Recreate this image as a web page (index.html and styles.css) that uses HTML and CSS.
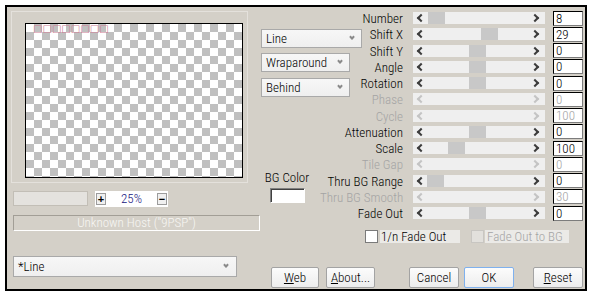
FILE: index.html
```html
<!DOCTYPE html>
<html lang="en">

<head>
    <meta charset="UTF-8">
    <title>Line</title>
    <link rel="stylesheet" href="styles.css">
</head>

<body>
    <div class="dialog">
        <!-- Preview side -->
        <div class="left-col">
            <div class="preview-panel">
                <div class="preview"><span class="missing-glyphs">□□□□□□□□</span></div>
            </div>

            <div class="zoom-row">
                <div class="zoom-field"></div>
                <div class="zoom-control">
                    <span class="zoom-btn">+</span>
                    <span class="zoom-value">25%</span>
                    <span class="zoom-btn">−</span>
                </div>
            </div>

            <div class="host-box">Unknown Host ("9PSP")</div>

            <div class="select preset-select">*Line</div>
        </div>

        <!-- Parameters side -->
        <div class="right-col">
            <div class="params">
                <div class="mode-col">
                    <div class="select select-line">Line</div>
                    <div class="select select-edge">Wraparound</div>
                    <div class="select select-order">Behind</div>
                    <div class="bg-color">
                        <div class="bg-label">BG Color</div>
                        <div class="bg-swatch"></div>
                    </div>
                </div>

                <div class="param-label">Number</div>
                <div class="track"><span class="thumb" style="left: 15px"></span></div>
                <div class="value">8</div>

                <div class="param-label">Shift X</div>
                <div class="track"><span class="thumb" style="left: 68px"></span></div>
                <div class="value">29</div>

                <div class="param-label">Shift Y</div>
                <div class="track"><span class="thumb" style="left: 56px"></span></div>
                <div class="value">0</div>

                <div class="param-label">Angle</div>
                <div class="track"><span class="thumb" style="left: 56px"></span></div>
                <div class="value">0</div>

                <div class="param-label">Rotation</div>
                <div class="track"><span class="thumb" style="left: 56px"></span></div>
                <div class="value">0</div>

                <div class="param-label disabled">Phase</div>
                <div class="track disabled"></div>
                <div class="value disabled">0</div>

                <div class="param-label disabled">Cycle</div>
                <div class="track disabled"></div>
                <div class="value disabled">100</div>

                <div class="param-label">Attenuation</div>
                <div class="track"><span class="thumb" style="left: 56px"></span></div>
                <div class="value">0</div>

                <div class="param-label">Scale</div>
                <div class="track"><span class="thumb" style="left: 35px"></span></div>
                <div class="value">100</div>

                <div class="param-label disabled">Tile Gap</div>
                <div class="track disabled"></div>
                <div class="value disabled">0</div>

                <div class="param-label">Thru BG Range</div>
                <div class="track"><span class="thumb" style="left: 14px"></span></div>
                <div class="value">0</div>

                <div class="param-label disabled">Thru BG Smooth</div>
                <div class="track disabled"></div>
                <div class="value disabled">30</div>

                <div class="param-label">Fade Out</div>
                <div class="track"><span class="thumb" style="left: 56px"></span></div>
                <div class="value">0</div>
            </div>

            <div class="check-row">
                <span class="checkbox"></span>
                <span class="check-label label-fade">1/n Fade Out</span>
                <span class="checkbox disabled"></span>
                <span class="check-label label-bg disabled">Fade Out to BG</span>
            </div>

            <div class="button-row">
                <div class="button-group group-info">
                    <button type="button"><u>W</u>eb</button>
                    <button type="button" class="btn-about"><u>A</u>bout...</button>
                </div>
                <div class="button-group group-confirm">
                    <button type="button">Cancel</button>
                    <button type="button" class="btn-default">OK</button>
                </div>
                <button type="button" class="btn-reset"><u>R</u>eset</button>
            </div>
        </div>
    </div>
</body>

</html>
```

FILE: styles.css
```css
body {
    margin: 0;
    background: #ffffff;
    font-family: Roboto, "Liberation Sans", sans-serif;
    font-stretch: 78%;
    font-weight: 350;
    font-size: 13px;
    color: #000000;
}

.dialog {
    box-sizing: border-box;
    width: 582px;
    height: 286px;
    margin: 5px 0 0 5px;
    border: 2px solid #000000;
    background: #d4d0c8;
    display: flex;
    padding: 0 2px 0 4px;
}

/* ---------- left column ---------- */

.left-col {
    width: 249px;
    display: flex;
    flex-direction: column;
}

.preview-panel {
    box-sizing: border-box;
    width: 237px;
    height: 172px;
    margin-top: 4px;
    border: 1px solid #e4e1dc;
}

.preview {
    box-sizing: border-box;
    width: 218px;
    height: 155px;
    margin: 11px 0 0 13px;
    border: 1px solid #000000;
    background: repeating-conic-gradient(#c0c0c0 0 25%, #ffffff 0 50%) 0 0 / 16px 16px;
    padding: 1px 7px;
}

.missing-glyphs {
    display: block;
    font-family: "DejaVu Sans", sans-serif;
    font-stretch: normal;
    font-weight: normal;
    font-size: 10px;
    line-height: 8px;
    color: #cf7f95;
}

.zoom-row {
    display: flex;
    gap: 7px;
    margin: 8px 0 0 2px;
}

.zoom-field {
    box-sizing: border-box;
    width: 75px;
    height: 15px;
    background: #e4e2de;
    border: 1px solid #c2beb6;
}

.zoom-control {
    box-sizing: border-box;
    width: 73px;
    height: 16px;
    background: #ffffff;
    display: flex;
    align-items: center;
    justify-content: space-between;
    padding: 0 1px;
}

.zoom-btn {
    box-sizing: border-box;
    width: 10px;
    height: 12px;
    border: 1px solid #9c9c9c;
    background: #f0f0f0;
    font-family: "Liberation Sans", sans-serif;
    font-weight: bold;
    font-size: 11px;
    line-height: 10px;
    text-align: center;
}

.zoom-value {
    color: #141480;
    line-height: 14px;
}

.host-box {
    box-sizing: border-box;
    width: 247px;
    height: 16px;
    margin: 8px 0 0 2px;
    border: 1px solid;
    border-color: #a29e96 #ffffff #ffffff #a29e96;
    color: #f7f6f3;
    text-align: center;
    line-height: 14px;
    white-space: nowrap;
}

/* ---------- drop-down boxes ---------- */

.select {
    box-sizing: border-box;
    position: relative;
    height: 19px;
    border: 1px solid #a9a9a9;
    background: linear-gradient(#f7f7f7, #efefef);
    padding-left: 4px;
    line-height: 17px;
    white-space: nowrap;
}

.select::after {
    content: "";
    position: absolute;
    right: 7px;
    top: 5px;
    width: 2px;
    height: 2px;
    border-right: 2px solid #8a8a8a;
    border-bottom: 2px solid #8a8a8a;
    transform: rotate(45deg);
}

.preset-select {
    width: 224px;
    height: 21px;
    line-height: 19px;
    margin: auto 0 12px 2px;
}

.preset-select::after {
    top: 6px;
    right: 8px;
}

/* ---------- right column ---------- */

.right-col {
    width: 323px;
    display: flex;
    flex-direction: column;
}

.params {
    display: grid;
    grid-template-columns: 60px 93px 132px 38px;
    grid-template-rows: repeat(13, 16.25px);
    margin-top: 3px;
}

.mode-col {
    grid-column: 1;
    grid-row: 1 / 14;
    display: flex;
    flex-direction: column;
    align-items: flex-start;
}

.select-line {
    width: 101px;
    margin: 19px 0 0 1px;
}

.select-edge {
    width: 89px;
    margin: 5px 0 0 1px;
}

.select-order {
    width: 89px;
    margin: 6px 0 0 1px;
}

.bg-color {
    width: 54px;
    margin-top: 73px;
    display: flex;
    flex-direction: column;
    align-items: center;
}

.bg-label {
    line-height: 15px;
    white-space: nowrap;
}

.bg-swatch {
    box-sizing: border-box;
    width: 35px;
    height: 15px;
    margin-top: 3px;
    background: #ffffff;
    border: 1px solid;
    border-color: #808080 #ffffff #ffffff #808080;
    box-shadow: inset 1px 1px 0 #404040;
}

.param-label {
    align-self: center;
    padding: 1px 10px 0 0;
    text-align: right;
    line-height: 15px;
    white-space: nowrap;
}

.track {
    position: relative;
    align-self: center;
    height: 12px;
    background: #efefef;
}

.track::before,
.track::after {
    content: "";
    position: absolute;
    top: 3px;
    width: 4px;
    height: 4px;
    border-left: 2px solid #3c3c3c;
    border-bottom: 2px solid #3c3c3c;
}

.track::before {
    left: 5px;
    transform: rotate(45deg);
}

.track::after {
    right: 7px;
    transform: rotate(-135deg);
}

.track.disabled::before,
.track.disabled::after {
    border-color: #c4c4c4;
}

.thumb {
    position: absolute;
    top: 0;
    width: 17px;
    height: 12px;
    background: #c8c8c8;
}

.value {
    box-sizing: border-box;
    justify-self: end;
    align-self: center;
    width: 30px;
    height: 15px;
    background: #ffffff;
    border: 1px solid #7c7c7c;
    border-top-color: #000000;
    border-left-color: #000000;
    padding-left: 2px;
    line-height: 13px;
}

.disabled {
    color: #a4a4a4;
}

/* ---------- check boxes ---------- */

.check-row {
    display: flex;
    align-items: center;
    height: 13px;
    margin-top: 9px;
    padding-left: 105px;
}

.checkbox {
    box-sizing: border-box;
    width: 13px;
    height: 13px;
    background: #ffffff;
    border: 1px solid #7a7a7a;
}

.checkbox.disabled {
    background: #e2e0dc;
    border-color: #c8c6c2;
}

.check-label {
    box-sizing: border-box;
    height: 13px;
    margin-left: 2px;
    padding-left: 1px;
    background: #ebeae7;
    line-height: 13px;
    white-space: nowrap;
}

.label-fade {
    width: 80px;
    margin-right: 11px;
}

.label-bg {
    width: 84px;
    margin-left: 1px;
    padding-left: 2px;
}

/* ---------- buttons ---------- */

.button-row {
    display: flex;
    margin: auto 0 1px 0;
}

.button-group {
    display: flex;
    gap: 7px;
}

.group-info {
    margin-left: 11px;
}

.group-confirm {
    margin-left: 34px;
    gap: 5px;
}

button {
    box-sizing: border-box;
    width: 50px;
    height: 21px;
    padding: 0;
    border: 1px solid #a3a3a3;
    border-radius: 2px;
    background: linear-gradient(#fcfcfc, #ededed);
    font-family: inherit;
    font-stretch: inherit;
    font-weight: inherit;
    font-size: 13px;
    color: #000000;
    line-height: 19px;
}

.group-info button {
    width: 48px;
}

.group-info .btn-about {
    width: 49px;
}

.btn-default {
    border-color: #7fb1ee;
}

.btn-reset {
    margin-left: 19px;
}
```
